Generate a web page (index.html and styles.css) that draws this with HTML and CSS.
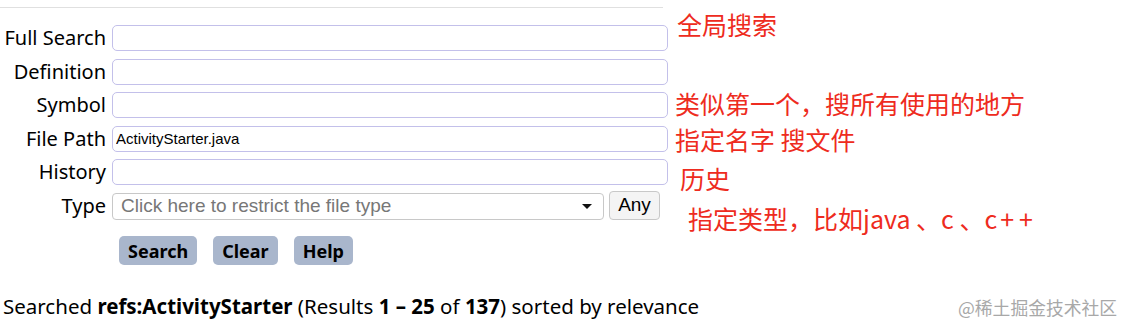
FILE: index.html
```html
<!DOCTYPE html>
<html lang="zh-CN">
<head>
  <meta charset="UTF-8" />
  <title>Search</title>
  <link rel="stylesheet" href="styles.css">
</head>
<body>
  <div class="page">
    <hr class="rule">

    <form class="search-form">
      <label for="full">Full Search</label>
      <input type="text" id="full" />

      <label for="defs">Definition</label>
      <input type="text" id="defs" />

      <label for="refs">Symbol</label>
      <input type="text" id="refs" />

      <label for="path">File Path</label>
      <input type="text" id="path" value="ActivityStarter.java" />

      <label for="hist">History</label>
      <input type="text" id="hist" />

      <label for="type">Type</label>
      <div class="type-row">
        <div class="type-select">
          <span>Click here to restrict the file type</span>
          <svg width="12" height="7" viewBox="0 0 12 7"><path d="M1 1h10L6 6z" fill="#111"/></svg>
        </div>
        <button type="button" class="any">Any</button>
      </div>

      <div class="actions">
        <button type="button" class="btn">Search</button>
        <button type="button" class="btn">Clear</button>
        <button type="button" class="btn">Help</button>
      </div>
    </form>

    <p class="results">Searched <b>refs:ActivityStarter</b> (Results <b>1 – 25</b> of <b>137</b>) sorted by relevance</p>

    <!-- notes drawn on top of the screenshot -->
    <span class="note note-full">全局搜索</span>
    <span class="note note-symbol">类似第一个，搜所有使用的地方</span>
    <span class="note note-path">指定名字 搜文件</span>
    <span class="note note-hist">历史</span>
    <span class="note note-type">指定类型，比如java 、c 、c<span class="plus">++</span></span>
    <span class="watermark">@稀土掘金技术社区</span>
  </div>
</body>
</html>
```

FILE: styles.css
```css
body {
  margin: 0;
  background: #fff;
  font-family: "Noto Sans", "Noto Sans CJK SC", sans-serif;
  color: #000;
}
.page {
  position: relative;
  width: 1132px;
  height: 329px;
  overflow: hidden;
}
.rule {
  margin: 7px 0 0 0;
  width: 663px;
  border: none;
  border-top: 1px solid #e0e0e0;
}
.search-form {
  display: grid;
  grid-template-columns: 106px 556px;
  column-gap: 6px;
  row-gap: 7.5px;
  margin-top: 17px;
  align-items: center;
}
.search-form label {
  text-align: right;
  font-size: 20px;
  line-height: 24px;
  white-space: nowrap;
}
.search-form input {
  box-sizing: border-box;
  height: 26px;
  margin: 0;
  padding: 0 3px;
  border: 1px solid #c3c0ea;
  border-radius: 5px;
  font-family: "Liberation Sans", sans-serif;
  font-size: 15px;
  color: #000;
}
.type-row {
  display: flex;
  align-items: center;
  gap: 5px;
}
.type-select {
  box-sizing: border-box;
  width: 492px;
  height: 27px;
  display: flex;
  align-items: center;
  justify-content: space-between;
  padding: 0 10px 0 8px;
  border: 1px solid #c8c8c8;
  border-radius: 4px;
  font-family: "Liberation Sans", sans-serif;
  font-size: 19px;
  color: #777;
}
.any {
  box-sizing: border-box;
  width: 51px;
  height: 29px;
  margin-top: -2px;
  padding: 0;
  background: #f4f4f4;
  border: 1px solid #c8c8c8;
  border-radius: 4px;
  font-family: "Liberation Sans", sans-serif;
  font-size: 19px;
  color: #000;
}
.actions {
  grid-column: 2;
  display: flex;
  gap: 16px;
  margin: 9px 0 0 7px;
}
.btn {
  height: 29px;
  padding: 0 9px;
  background: #a9b6cc;
  border: none;
  border-radius: 5px;
  font-family: "Noto Sans", sans-serif;
  font-size: 18px;
  font-weight: bold;
  color: #000;
}
.results {
  margin: 27px 0 0 3px;
  font-size: 20.5px;
}
.note {
  position: absolute;
  font-family: "Noto Sans CJK SC", sans-serif;
  font-size: 25px;
  line-height: 1;
  color: #ee2b20;
}
.plus {
  padding-left: 3px;
  letter-spacing: 5px;
}
.note-full { left: 677px; top: 12px; }
.note-symbol { left: 675px; top: 91px; }
.note-path { left: 675px; top: 127px; }
.note-hist { left: 680px; top: 166px; }
.note-type { left: 688px; top: 206px; }
.watermark {
  position: absolute;
  left: 958px;
  top: 294px;
  font-family: "Noto Sans CJK SC", sans-serif;
  font-size: 17.8px;
  color: #a8a8a8;
}
```
